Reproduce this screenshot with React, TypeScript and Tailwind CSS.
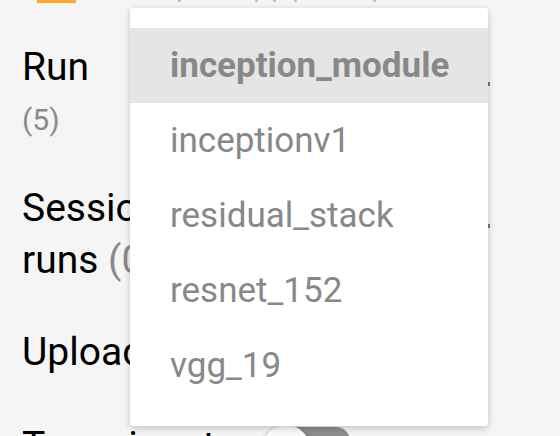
import React from "react"

const models = ["inception_module", "inceptionv1", "residual_stack", "resnet_152", "vgg_19"]

// descender bits of the text row cut off above the viewport
const topBits = [178, 255, 273, 294, 373]

function Toggle() {
  return (
    <div className="relative ml-[26px] mt-[1px] h-[30px] w-[88px]">
      <div className="absolute left-[20px] top-[2px] h-[28px] w-[68px] rounded-full bg-[#8c8c8c]" />
      <div className="absolute left-0 top-0 h-[48px] w-[48px] rounded-full bg-[#fafafa] shadow-[0_1px_4px_rgba(0,0,0,0.35)]" />
    </div>
  )
}

export default function App() {
  return (
    <div
      className="relative h-[436px] w-[560px] overflow-hidden bg-[#f5f5f5] text-black"
      style={{ fontFamily: "Roboto, 'Noto Sans', sans-serif" }}
    >
      <div className="flex h-[3px] items-start">
        <div className="ml-[37px] h-[3px] w-[39px] bg-[#ffa726]" />
        <div className="ml-[102px] h-[2px] w-[3px] bg-[#c4c4c4]" />
        <div className="ml-[74px] h-[2px] w-[3px] bg-[#c4c4c4]" />
        <div className="ml-[15px] h-[2px] w-[3px] bg-[#c4c4c4]" />
        <div className="ml-[18px] h-[2px] w-[3px] bg-[#c4c4c4]" />
        <div className="ml-[76px] h-[2px] w-[3px] bg-[#c4c4c4]" />
      </div>

      <div className="pl-[22px]">
        <div className="mt-[42px] flex w-[468px] items-end justify-between">
          <div className="text-[39px] leading-[44px]">Run</div>
          <div className="mb-[3px] h-[4px] w-[2px] bg-[#757575]" />
        </div>
        <div className="mt-[13px] text-[30px] leading-[36px] text-[#8a8a8a]">(5)</div>

        <div className="mt-[44px] flex w-[468px] items-start justify-between">
          <div className="text-[39px] leading-[52px]">
            Session
            <br />
            runs <span className="text-[#8a8a8a]">(0)</span>
          </div>
          <div className="mt-[42px] h-[4px] w-[2px] bg-[#757575]" />
        </div>

        <div className="mt-[44px] text-[39px] leading-[44px]">Upload</div>

        <div className="mt-[50px] flex items-start">
          <div className="text-[39px] leading-[44px]">Trace inputs</div>
          <Toggle />
        </div>
      </div>

      <div className="absolute left-[130px] top-[8px] h-[418px] w-[358px] rounded-[3px] bg-white pt-[20px] shadow-[0_2px_7px_rgba(0,0,0,0.22)]">
        {models.map((m, i) => (
          <div
            key={m}
            className={`flex h-[75px] items-center pl-[40px] pt-[1px] text-[35px] text-[#888888] ${
              i === 0 ? "bg-[#e5e5e5] font-bold" : ""
            }`}
          >
            {m}
          </div>
        ))}
      </div>
    </div>
  )
}
